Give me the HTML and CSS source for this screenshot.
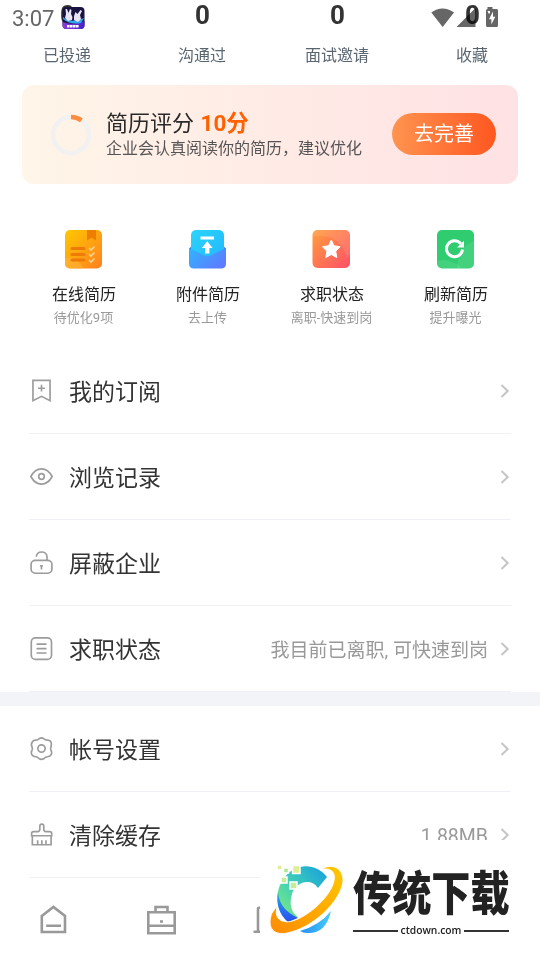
FILE: index.html
```html
<!DOCTYPE html>
<html lang="zh-CN">
<head>
<meta charset="utf-8">
<title>我的</title>
<link rel="stylesheet" href="styles.css">
</head>
<body>
<main class="screen">
  <section class="stats">
    <div class="stat"><b>0</b><span>已投递</span></div>
    <div class="stat"><b>0</b><span>沟通过</span></div>
    <div class="stat"><b>0</b><span>面试邀请</span></div>
    <div class="stat"><b>0</b><span>收藏</span></div>
  </section>

  <section class="score">
    <svg class="ring" width="42" height="42" viewBox="0 0 42 42" fill="none" stroke-width="4.6">
      <circle cx="21" cy="21" r="18" stroke="#f1f1f2"/>
      <path d="M21 3A18 18 0 0 1 31.4 6.3" stroke="#ff8b3d"/>
    </svg>
    <div class="score-text">
      <h1>简历评分 <strong>10分</strong></h1>
      <p>企业会认真阅读你的简历，建议优化</p>
    </div>
    <button class="improve">去完善</button>
  </section>

  <section class="tools">
    <div class="tool">
      <svg width="38" height="40" viewBox="0 0 38 40">
        <defs><linearGradient id="gold" x1="0" y1="0" x2="1" y2="1"><stop stop-color="#ffc800"/><stop offset="1" stop-color="#ff8020"/></linearGradient></defs>
        <rect x="0" y="1" width="37" height="38.5" rx="5" fill="url(#gold)"/>
        <path d="M0 29Q10 26 19 39.5H5Q0 39.5 0 34.5Z" fill="#ffb43c" opacity=".6"/>
        <path d="M22 1h9v10.500l-4.500-2.700-4.500 2.700Z" fill="#ee7e00"/>
        <path d="M7 19.500H19M7 25.500H19M7 31H19" stroke="#ee7b08" stroke-width="3" stroke-linecap="round"/>
        <path d="M24 19l2 2 3.500-3.500M24 25l2 2 3.500-3.500M24 31l2 2 3.500-3.500" fill="none" stroke="#ffd08c" stroke-width="1.700"/>
      </svg>
      <b>在线简历</b><small>待优化9项</small>
    </div>
    <div class="tool">
      <svg width="38" height="40" viewBox="0 0 38 40">
        <defs>
          <linearGradient id="sky" x1="0" y1="0" x2="1" y2="1"><stop stop-color="#2bd5fa"/><stop offset="1" stop-color="#22b5ff"/></linearGradient>
          <linearGradient id="blue" x1="0" y1="0" x2="1" y2=".6"><stop stop-color="#2fb6ff"/><stop offset="1" stop-color="#5c7dff"/></linearGradient>
        </defs>
        <path d="M2 17.500 0 20V27H37V20L35 17.500Z" fill="#2774f2"/>
        <rect x="2" y="1" width="33" height="34" rx="5" fill="url(#sky)"/>
        <path d="M0 19 15.500 26.500Q18.500 28 21.500 26.500L37 19V34.500Q37 39.500 32 39.500H5Q0 39.500 0 34.500Z" fill="url(#blue)"/>
        <path d="M11.500 7.500H25V10.500H11.500ZM18.200 12.200 23.600 19H20.400V24.500H16V19H12.800Z" fill="#fff"/>
      </svg>
      <b>附件简历</b><small>去上传</small>
    </div>
    <div class="tool">
      <svg width="38" height="40" viewBox="0 0 38 40">
        <defs><linearGradient id="coral" x1="0" y1="0" x2="1" y2="1"><stop stop-color="#ff9e3c"/><stop offset="1" stop-color="#ff5068"/></linearGradient></defs>
        <rect x="-.5" y="1" width="37.500" height="38" rx="5" fill="url(#coral)"/>
        <path d="M0 8Q26 2 34 29L37 25V6Q37 1 32 1H5Q0 1 0 6Z" fill="#fff" opacity=".1"/>
        <path d="M18.300 11 21 16.800 27.100 17.700 22.700 22.200 23.800 28.500 18.300 25.500 12.800 28.500 13.900 22.200 9.500 17.700 15.600 16.800Z" fill="#fff" stroke="#fff" stroke-linejoin="round"/>
      </svg>
      <b>求职状态</b><small>离职-快速到岗</small>
    </div>
    <div class="tool">
      <svg width="38" height="40" viewBox="0 0 38 40">
        <rect x="0" y="1" width="37" height="38.500" rx="5" fill="#2fcc70"/>
        <path d="M20 39.500Q21 17 37 12V34.500Q37 39.500 32 39.500Z" fill="#fff" opacity=".1"/>
        <path d="M0 32Q14 28 25 39.500H5Q0 39.500 0 34.500Z" fill="#fff" opacity=".1"/>
        <path d="M23.800 14.800A8 8 0 1 0 25.500 20.500" fill="none" stroke="#fff" stroke-width="3"/>
        <path d="M27 11.800V18.600H20Z" fill="#fff"/>
      </svg>
      <b>刷新简历</b><small>提升曝光</small>
    </div>
  </section>

  <section class="menu">
    <div class="row">
      <svg class="icon" viewBox="0 0 24 24"><path d="M3.800 2.200H20.200V21.800L12 17.600 3.800 21.800ZM12 6.500v6.500M8.700 9.800h6.600"/></svg>
      <span>我的订阅</span>
      <svg class="arrow" viewBox="0 0 10 16"><path d="M1.500 2 7.700 8 1.500 14"/></svg>
    </div>
    <div class="row">
      <svg class="icon" viewBox="0 0 24 24"><path d="M1.800 12C7 2.200 17 2.200 22.200 12 17 21.800 7 21.800 1.800 12Z"/><circle cx="12" cy="12" r="2.700"/></svg>
      <span>浏览记录</span>
      <svg class="arrow" viewBox="0 0 10 16"><path d="M1.500 2 7.700 8 1.500 14"/></svg>
    </div>
    <div class="row">
      <svg class="icon" viewBox="0 0 24 24"><rect x="2" y="10" width="20" height="12.300" rx="4"/><path d="M7 6.500C7.500 .5 17 .3 17.300 6.500V10M12 14.500v4.200M10.700 15.200h2.600"/></svg>
      <span>屏蔽企业</span>
      <svg class="arrow" viewBox="0 0 10 16"><path d="M1.500 2 7.700 8 1.500 14"/></svg>
    </div>
    <div class="row">
      <svg class="icon" viewBox="0 0 24 24"><rect x="2.200" y="1.800" width="19.400" height="20.600" rx="4"/><path d="M7.200 7.800h9.600M7.200 12.100h9.600M7.200 16.300h9.600"/></svg>
      <span>求职状态</span>
      <em>我目前已离职, 可快速到岗</em>
      <svg class="arrow" viewBox="0 0 10 16"><path d="M1.500 2 7.700 8 1.500 14"/></svg>
    </div>
  </section>
  <div class="band"></div>
  <section class="menu">
    <div class="row">
      <svg class="icon" viewBox="0 0 24 24"><path d="M9.600 2.700Q12 .8 14.400 2.700 16 4 18 4 21.300 4.300 21.500 7.500 21.300 9.500 21 11 20.400 12 21 13.300 22.500 16 21 18.300 20 19.800 17.500 19.900 16 20 14.400 21.600 12 23.300 9.600 21.600 8 20 6.500 19.900 4 19.800 3 18.300 1.500 16 3 13.300 3.600 12 3 11 1.600 8 3 6 4 4.200 6 4 8 4 9.600 2.700Z"/><circle cx="12" cy="12" r="3.500"/></svg>
      <span>帐号设置</span>
      <svg class="arrow" viewBox="0 0 10 16"><path d="M1.500 2 7.700 8 1.500 14"/></svg>
    </div>
    <div class="row">
      <svg class="icon" viewBox="0 0 24 24"><path d="M3.200 13.500V21.800H21.200V13.500M8.300 21.500V17.500M12.300 21.500V17.500M16.300 21.500V17.500M2.500 13.200V11Q2.500 9.200 4.500 9.200H8.500Q10.400 9.200 10.400 7V4Q10.400 2 12.300 2 14.200 2 14.200 4V7Q14.200 9.200 16 9.200H19.800Q21.800 9.200 21.800 11V13.200Z"/></svg>
      <span>清除缓存</span>
      <em class="size">1.88MB</em>
      <svg class="arrow" viewBox="0 0 10 16"><path d="M1.500 2 7.700 8 1.500 14"/></svg>
    </div>
  </section>

  <nav class="tabs">
    <svg viewBox="0 0 32 32"><path d="M3.800 12 15.400 3 27 12V28H3.800ZM8.200 21.700H23"/></svg>
    <svg viewBox="0 0 32 32"><path d="M2.300 8.300H28.700V29.300H2.300ZM9.500 8V3H21.500V8M2.300 21.800H28.700M14 17.500h3"/></svg>
    <svg viewBox="0 0 32 32"><path d="M-.5 27.700H30M4 27V4.500Q4 3.800 5 3.800H24V27"/></svg>
  </nav>
</main>

<header class="status">
  <time>3:07</time>
  <svg class="app" width="23" height="22" viewBox="0 0 23 22">
    <defs><linearGradient id="app" x1="0" x2="1"><stop stop-color="#8f3bd8"/><stop offset="1" stop-color="#4422cc"/></linearGradient></defs>
    <rect x=".5" width="22" height="22" rx="4" fill="#181340"/>
    <path d="M.5 15Q10 19 22.500 14V18Q22.500 22 18.500 22H4.500Q.5 22 .5 18Z" fill="url(#app)"/>
    <path d="M1 10Q8 17 22 11L19 16Q8 18 1 12Z" fill="#2fa8f2"/>
    <path d="M3.500 2 5 2 6.500 6 8 2 9.500 3 9 7 10.500 10 10 13 6 14 3 11 4 7ZM13.500 5 15.500 7 18.500 3 20 4 18 8 19 12 16 15 12 13 12 9Z" fill="#e9e4f4"/>
    <path d="M5 19.300H17" stroke="#fff" stroke-width="2.500" stroke-dasharray="2.500 .4"/>
  </svg>
  <svg class="signals" width="70" height="22" viewBox="0 0 70 22" fill="#666">
    <path d="M.3 5.500Q11.500 -2.300 23 5.500L11.700 20Z"/>
    <path d="M25.500 20 44.500 1V20Z"/>
    <path d="M56.500 0h5v2H65.500Q67 2 67 3.500V18.500Q67 20 65.500 20H56.500Q55 20 55 18.500V3.500Q55 2 56.500 2Z"/>
    <path d="M62 4.500 58 12.200H60.400V17.500L64.300 9.800H62ZM56.500 4H59V6.500H57.500" fill="#fff"/>
  </svg>
</header>

<aside class="brand">
  <svg class="logo" width="90" height="90" viewBox="0 0 90 90">
    <defs>
      <linearGradient id="arc" x1="0" y1="1" x2="1" y2="0"><stop stop-color="#8ef070"/><stop offset=".45" stop-color="#43d2b4"/><stop offset="1" stop-color="#159ee0"/></linearGradient>
      <linearGradient id="deep" x1="0" y1="0" x2="0" y2="1"><stop stop-color="#24a8e8"/><stop offset="1" stop-color="#274ff0"/></linearGradient>
      <linearGradient id="orbit" x1="0" y1="1" x2="1" y2="0"><stop stop-color="#ff8b00"/><stop offset="1" stop-color="#ffc800"/></linearGradient>
      <linearGradient id="tail" x1="0" y1="0" x2="1" y2="0"><stop stop-color="#288df4"/><stop offset="1" stop-color="#43cdf8"/></linearGradient>
    </defs>
    <path d="M62 22 53 33C46 22 30 27 27 39 24 49 26 57 33 62L24 67C10 56 9 37 19 23 31 7 51 8 62 22Z" fill="url(#arc)"/>
    <path d="M13 37C14 51 23 58 33 63L23 67C14 59 11 49 13 37Z" fill="url(#deep)"/>
    <path d="M35 76Q55 70 66 56Q61 79 42 78Q38 78 35 76Z" fill="url(#tail)"/>
    <path d="M56 14C68 8 78 13 78 26 76 46 48 73 22 78 7 81 2 71 7 58L12 51Q8 66 22 67C38 66 65 44 69 26 71 17 66 13 56 14Z" fill="url(#orbit)" stroke="#fff" stroke-width=".8"/>
    <g stroke="#fff" stroke-width="1.500"><path d="M27.500 10.500h7.500v8h-7.500Z" fill="#e0ef94"/><path d="M16 22h6v6h-6ZM25 27h7v7h-7Z" fill="#c3ee98"/><path d="M18.500 13h5v5h-5Z" fill="#aee78e"/><path d="M12 10h5v5h-5Z" fill="#e0ef94"/></g>
  </svg>
  <div class="brand-text">
    <div class="brand-name"><span>传统下载</span></div>
    <div class="brand-site">ctdown.com</div>
  </div>
</aside>
</body>
</html>
```
FILE: styles.css
```css
* { box-sizing: border-box; }

body {
  position: relative;
  width: 540px;
  height: 960px;
  margin: 0;
  overflow: hidden;
  background: #fff;
  color: #333;
  font-family: Roboto, "Noto Sans CJK SC", sans-serif;
}

svg { display: block; flex: none; overflow: visible; }

.screen {
  display: flex;
  flex-direction: column;
  height: 960px;
}

.screen > * { flex: none; }

.stats {
  display: grid;
  grid-template-columns: repeat(4, 1fr);
  height: 85px;
  text-align: center;
}

.stat b {
  display: block;
  height: 30px;
  font-size: 26px;
  line-height: 31px;
}

.stat span {
  display: block;
  margin-top: 14px;
  padding-right: 1px;
  color: #596570;
  font-size: 16px;
  line-height: 24px;
}

.score {
  display: flex;
  align-items: center;
  height: 99px;
  margin: 0 22px;
  padding: 0 22px 0 28px;
  border-radius: 12px;
  background: linear-gradient(90deg, #fff5e8, #ffece6 45%, #ffe2e4);
}

.score-text {
  flex: 1;
  margin-left: 14px;
  white-space: nowrap;
}

.score h1 {
  margin: 0;
  color: #292929;
  font-size: 22px;
  font-weight: 400;
  line-height: 28px;
}

.score strong {
  margin-left: 1px;
  color: #ff6100;
  font-size: 22.5px;
}

.score p {
  margin: 0;
  color: #555;
  font-size: 16px;
  line-height: 22px;
}

.improve {
  width: 104px;
  height: 42px;
  margin-bottom: 1px;
  padding: 0;
  border: 0;
  border-radius: 21px;
  background: linear-gradient(90deg, #ff9450, #ff5720);
  color: #fff;
  font: 20px/42px Roboto, "Noto Sans CJK SC", sans-serif;
}

.tools {
  display: grid;
  grid-template-columns: repeat(4, 1fr);
  height: 164px;
  padding: 45px 22px 0;
}

.tool {
  display: flex;
  flex-direction: column;
  align-items: center;
}

.tool b {
  margin-top: 14px;
  color: #222;
  font-size: 16px;
  font-weight: 400;
  line-height: 24px;
}

.tool small {
  margin-top: 1px;
  padding-right: 1px;
  color: #999;
  font-size: 13px;
  line-height: 20px;
}

.menu { padding: 0 29px; }

.row {
  display: flex;
  align-items: center;
  height: 86px;
  border-bottom: 1px solid #f0f1f5;
  font-size: 23px;
}

.icon {
  width: 25px;
  height: 25px;
  margin-right: 15px;
  fill: none;
  stroke: #9c9c9c;
  stroke-width: 1.6;
}

.row span {
  flex: 1;
  padding-bottom: 1px;
}

.row em {
  color: #999;
  font-size: 19px;
  font-style: normal;
}

.row .size {
  padding-top: 4px;
  font-size: 19.5px;
}

.arrow {
  width: 10px;
  height: 16px;
  margin: 0 1px 0 12px;
  fill: none;
  stroke: #c5c5c5;
  stroke-width: 2;
}

.band {
  height: 14px;
  background: #f3f4f8;
}

.tabs {
  display: flex;
  gap: 76px;
  padding: 26px 38px;
}

.tabs svg {
  width: 32px;
  height: 32px;
  fill: none;
  stroke: #999;
  stroke-width: 2.6;
}

.status {
  position: absolute;
  inset: 0 0 auto;
  display: flex;
  height: 36px;
  padding: 7px 39px 0 12px;
}

.status time {
  width: 50px;
  color: #666;
  font-size: 22px;
  line-height: 24px;
}

.signals {
  margin-left: auto;
  mix-blend-mode: multiply;
}

.brand {
  position: absolute;
  right: 0;
  bottom: 0;
  display: flex;
  width: 280px;
  height: 120px;
  padding: 15px 0 0 5px;
  background: #fff;
}

.brand-text {
  width: 156px;
  margin-left: -2px;
}

.brand-name {
  height: 69px;
  color: #222;
  font-family: "Noto Sans CJK SC", sans-serif;
  font-size: 44px;
  font-weight: 900;
  line-height: 70px;
  white-space: nowrap;
}

.brand-name span {
  display: inline-block;
  transform: scale(.89, 1.06);
  transform-origin: left;
}

.brand-site {
  display: flex;
  align-items: center;
  gap: 3px;
  color: #222;
  font: 600 10.3px/13px "Open Sans", sans-serif;
}

.brand-site::before,
.brand-site::after {
  flex: 1;
  height: 2px;
  background: #333;
  content: "";
}
```
